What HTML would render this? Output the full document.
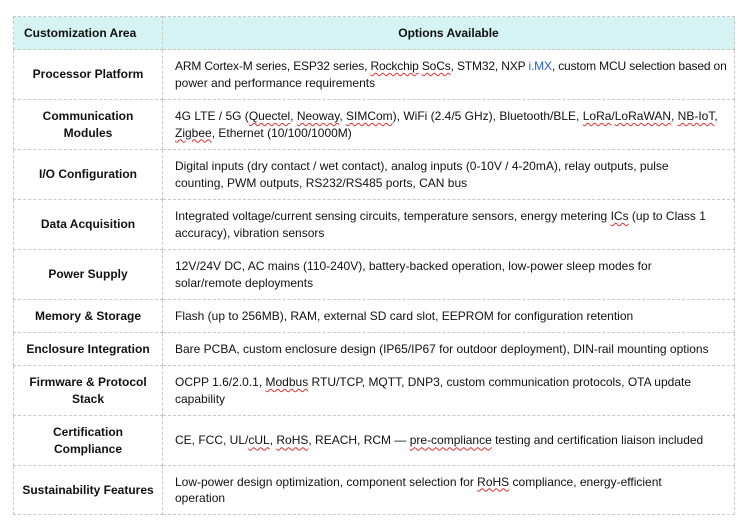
<!DOCTYPE html>
<html><head><meta charset="utf-8"><style>
body{margin:0;background:#fff;width:750px;height:527px;overflow:hidden;font-family:"Liberation Sans",sans-serif;color:#111;}
table{position:absolute;left:13px;top:16px;border-collapse:collapse;width:721px;font-size:12px;table-layout:fixed;}
td,th{border:1px dashed #c8c8c8;padding:0 10px;line-height:16.5px;}
th{background:#d4f3f2;font-weight:bold;height:32px;text-align:center;}
th:first-child{text-align:left;padding-left:10px;}
td:first-child{font-weight:bold;text-align:center;padding:0 2px;}
td:last-child{padding-left:12px;padding-right:0;white-space:nowrap;overflow:hidden;}
.w{text-decoration:underline wavy #e03030;text-decoration-thickness:1px;text-underline-offset:2px;}
.b{color:#2a5fd8;}
.n{letter-spacing:-0.15px;}
</style></head><body>
<table>
<colgroup><col style="width:149px"><col style="width:572px"></colgroup>
<tr><th>Customization Area</th><th>Options Available</th></tr>
<tr style="height:50px"><td>Processor Platform</td><td><span class="n">ARM Cortex-M series, ESP32 series, <span class="w">Rockchip</span> <span class="w">SoCs</span>, STM32, NXP <span class="b">i.MX</span>, custom MCU selection based on</span><br>power and performance requirements</td></tr>
<tr style="height:50px"><td>Communication<br>Modules</td><td>4G LTE / 5G (<span class="w">Quectel</span>, <span class="w">Neoway</span>, <span class="w">SIMCom</span>), WiFi (2.4/5 GHz), Bluetooth/BLE, <span class="w">LoRa</span>/<span class="w">LoRaWAN</span>, <span class="w">NB-IoT</span>,<br><span class="w">Zigbee</span>, Ethernet (10/100/1000M)</td></tr>
<tr style="height:50px"><td>I/O Configuration</td><td>Digital inputs (dry contact / wet contact), analog inputs (0-10V / 4-20mA), relay outputs, pulse<br>counting, PWM outputs, RS232/RS485 ports, CAN bus</td></tr>
<tr style="height:50px"><td>Data Acquisition</td><td>Integrated voltage/current sensing circuits, temperature sensors, energy metering <span class="w">ICs</span> (up to Class 1<br>accuracy), vibration sensors</td></tr>
<tr style="height:50px"><td>Power Supply</td><td>12V/24V DC, AC mains (110-240V), battery-backed operation, low-power sleep modes for<br>solar/remote deployments</td></tr>
<tr style="height:33px"><td>Memory &amp; Storage</td><td>Flash (up to 256MB), RAM, external SD card slot, EEPROM for configuration retention</td></tr>
<tr style="height:33px"><td>Enclosure Integration</td><td>Bare PCBA, custom enclosure design (IP65/IP67 for outdoor deployment), DIN-rail mounting options</td></tr>
<tr style="height:50px"><td>Firmware &amp; Protocol Stack</td><td>OCPP 1.6/2.0.1, <span class="w">Modbus</span> RTU/TCP, MQTT, DNP3, custom communication protocols, OTA update<br>capability</td></tr>
<tr style="height:50px"><td>Certification<br>Compliance</td><td>CE, FCC, UL/<span class="w">cUL</span>, <span class="w">RoHS</span>, REACH, RCM — <span class="w">pre-compliance</span> testing and certification liaison included</td></tr>
<tr style="height:49px"><td>Sustainability Features</td><td>Low-power design optimization, component selection for <span class="w">RoHS</span> compliance, energy-efficient<br>operation</td></tr>
</table>
</body></html>
